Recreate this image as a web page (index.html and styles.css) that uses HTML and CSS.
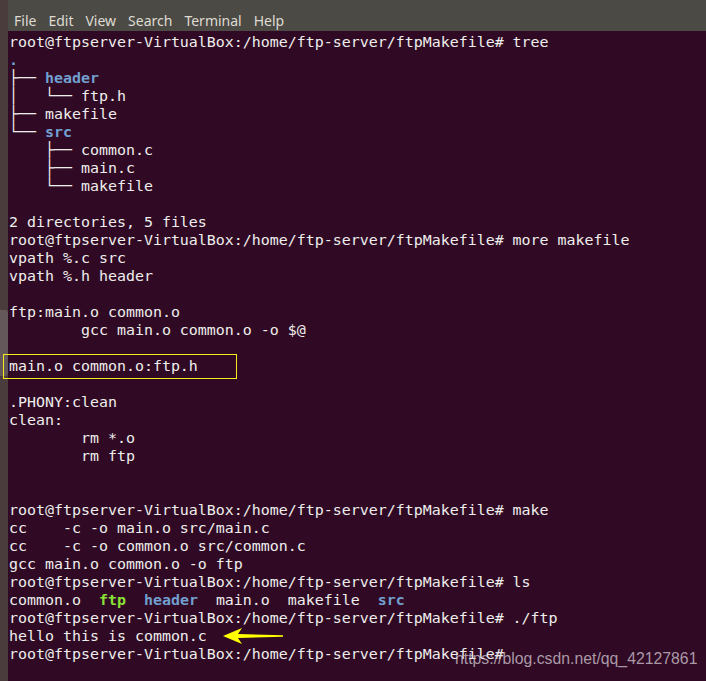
FILE: index.html
```html
<!DOCTYPE html>
<html>
<head>
<meta charset="utf-8">
<link rel="stylesheet" href="styles.css">
</head>
<body>
<div class="window">
  <div class="edge"><div class="thumb"></div></div>
  <div class="main">
    <div class="menubar">
      <span>File</span><span>Edit</span><span>View</span><span>Search</span><span>Terminal</span><span>Help</span>
    </div>
    <div class="term">
<pre class="out">root@ftpserver-VirtualBox:/home/ftp-server/ftpMakefile# tree
<span class="dir">.</span>
├── <span class="dir">header</span>
│   └── ftp.h
├── makefile
└── <span class="dir">src</span>
    ├── common.c
    ├── main.c
    └── makefile

2 directories, 5 files
root@ftpserver-VirtualBox:/home/ftp-server/ftpMakefile# more makefile
vpath %.c src
vpath %.h header

ftp:main.o common.o
        gcc main.o common.o -o $@

main.o common.o:ftp.h

.PHONY:clean
clean:
        rm *.o
        rm ftp


root@ftpserver-VirtualBox:/home/ftp-server/ftpMakefile# make
cc    -c -o main.o src/main.c
cc    -c -o common.o src/common.c
gcc main.o common.o -o ftp
root@ftpserver-VirtualBox:/home/ftp-server/ftpMakefile# ls
common.o  <span class="exe">ftp</span>  <span class="dir">header</span>  main.o  makefile  <span class="dir">src</span>
root@ftpserver-VirtualBox:/home/ftp-server/ftpMakefile# ./ftp
hello this is common.c
root@ftpserver-VirtualBox:/home/ftp-server/ftpMakefile# </pre>
      <div class="highlight"></div>
      <svg class="arrow" width="62" height="16" viewBox="0 0 62 16">
        <path d="M0 8 L19 0 L15 6 L60 7.3 L60 8.7 L15 10 L19 16 Z" fill="#ffff00"/>
      </svg>
      <div class="watermark">https://blog.csdn.net/qq_42127861</div>
    </div>
  </div>
</div>
</body>
</html>
```

FILE: styles.css
```css
html, body {
  margin: 0;
  padding: 0;
  background: #300a24;
}
.window {
  display: flex;
  width: 706px;
  height: 681px;
  overflow: hidden;
}
.edge {
  width: 8px;
  flex: none;
  background: #4a3c3c;
  display: flex;
  flex-direction: column;
}
.thumb {
  margin-top: 310px;
  height: 66px;
  background: #65585a;
  border-radius: 0 3px 3px 0;
}
.main {
  flex: 1;
  display: flex;
  flex-direction: column;
  min-width: 0;
}
.menubar {
  height: 31px;
  flex: none;
  background: #4b4a45;
  display: flex;
  align-items: center;
  gap: 12px;
  padding-left: 6px;
  padding-top: 9px;
  box-sizing: border-box;
  font-family: "Noto Sans", "DejaVu Sans", sans-serif;
  font-size: 14px;
  color: #dfdbd2;
}
.term {
  position: relative;
  flex: 1;
  background: #300a24;
}
.out {
  margin: 0;
  padding: 2px 0 0 1px;
  font-family: "DejaVu Sans Mono", "Liberation Mono", monospace;
  font-size: 14.95px;
  line-height: 18px;
  color: #eeeeec;
  white-space: pre;
}
.dir {
  color: #729fcf;
  font-weight: bold;
}
.exe {
  color: #8ae234;
  font-weight: bold;
}
.highlight {
  position: absolute;
  left: -5px;
  top: 323px;
  width: 232px;
  height: 23px;
  border: 1.5px solid #f4ea1c;
}
.arrow {
  position: absolute;
  left: 215px;
  top: 597px;
}
.watermark {
  position: absolute;
  left: 447px;
  top: 619px;
  font-family: "Liberation Sans", Arial, sans-serif;
  font-size: 15.8px;
  color: rgba(220, 210, 220, 0.72);
  white-space: nowrap;
}
```
